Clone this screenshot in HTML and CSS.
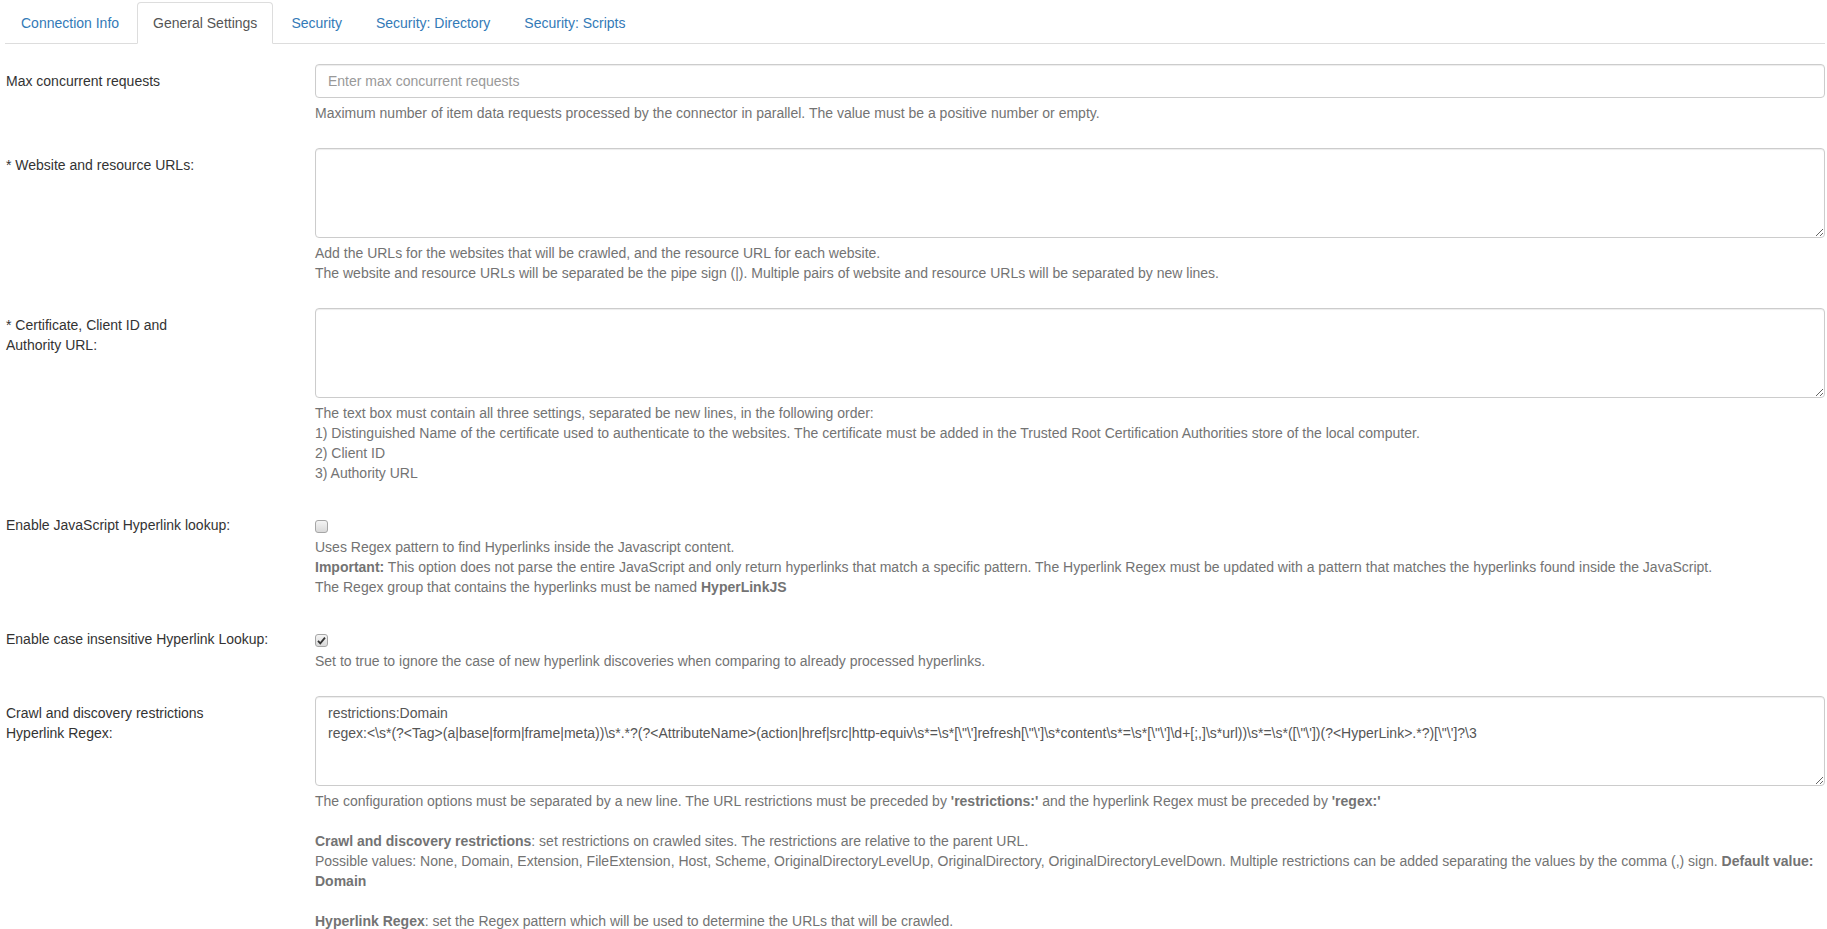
FILE: index.html
```html
<!DOCTYPE html>
<html lang="en">
<head>
    <meta charset="UTF-8">
    <title>Connector Settings</title>
    <link rel="stylesheet" href="styles.css">
</head>
<body>
    <ul class="nav-tabs">
        <li><a href="#">Connection Info</a></li>
        <li class="active"><a href="#">General Settings</a></li>
        <li><a href="#">Security</a></li>
        <li><a href="#">Security: Directory</a></li>
        <li><a href="#">Security: Scripts</a></li>
    </ul>

    <form class="tab-content">
        <div class="form-group">
            <label class="control-label" for="maxRequests">Max concurrent requests</label>
            <div class="control">
                <input type="text" class="form-control" id="maxRequests" placeholder="Enter max concurrent requests">
                <div class="help-block">Maximum number of item data requests processed by the connector in parallel. The value must be a positive number or empty.</div>
            </div>
        </div>

        <div class="form-group">
            <label class="control-label" for="websiteUrls">* Website and resource URLs:</label>
            <div class="control">
                <textarea class="form-control" id="websiteUrls"></textarea>
                <div class="help-block">
                    Add the URLs for the websites that will be crawled, and the resource URL for each website.<br>
                    The website and resource URLs will be separated be the pipe sign (|). Multiple pairs of website and resource URLs will be separated by new lines.
                </div>
            </div>
        </div>

        <div class="form-group">
            <label class="control-label" for="certificate">* Certificate, Client ID and<br>Authority URL:</label>
            <div class="control">
                <textarea class="form-control" id="certificate"></textarea>
                <div class="help-block">
                    The text box must contain all three settings, separated be new lines, in the following order:<br>
                    1) Distinguished Name of the certificate used to authenticate to the websites. The certificate must be added in the Trusted Root Certification Authorities store of the local computer.<br>
                    2) Client ID<br>
                    3) Authority URL
                </div>
            </div>
        </div>

        <div class="form-group">
            <label class="control-label" for="jsLookup">Enable JavaScript Hyperlink lookup:</label>
            <div class="control">
                <div class="checkbox">
                    <span class="check-box"><input type="checkbox" id="jsLookup"></span>
                </div>
                <div class="help-block check-help">
                    Uses Regex pattern to find Hyperlinks inside the Javascript content.<br>
                    <strong>Important:</strong> This option does not parse the entire JavaScript and only return hyperlinks that match a specific pattern. The Hyperlink Regex must be updated with a pattern that matches the hyperlinks found inside the JavaScript.<br>
                    The Regex group that contains the hyperlinks must be named <strong>HyperLinkJS</strong>
                </div>
            </div>
        </div>

        <div class="form-group">
            <label class="control-label" for="caseLookup">Enable case insensitive Hyperlink Lookup:</label>
            <div class="control">
                <div class="checkbox">
                    <span class="check-box">
                        <input type="checkbox" id="caseLookup" checked>
                        <svg class="tick" width="13" height="13" viewBox="0 0 13 13"><path d="M3 6.8 L5.3 9.3 L10 3.6" fill="none" stroke="#333" stroke-width="1.8"/></svg>
                    </span>
                </div>
                <div class="help-block check-help">Set to true to ignore the case of new hyperlink discoveries when comparing to already processed hyperlinks.</div>
            </div>
        </div>

        <div class="form-group">
            <label class="control-label" for="restrictions">Crawl and discovery restrictions<br>Hyperlink Regex:</label>
            <div class="control">
                <textarea class="form-control" id="restrictions">restrictions:Domain
regex:&lt;\s*(?&lt;Tag&gt;(a|base|form|frame|meta))\s*.*?(?&lt;AttributeName&gt;(action|href|src|http-equiv\s*=\s*[\"\']refresh[\"\']\s*content\s*=\s*[\"\']\d+[;,]\s*url))\s*=\s*([\"\'])(?&lt;HyperLink&gt;.*?)[\"\']?\3</textarea>
                <div class="help-block">
                    The configuration options must be separated by a new line. The URL restrictions must be preceded by <strong>'restrictions:'</strong> and the hyperlink Regex must be preceded by <strong>'regex:'</strong><br>
                    <br>
                    <strong>Crawl and discovery restrictions</strong>: set restrictions on crawled sites. The restrictions are relative to the parent URL.<br>
                    Possible values: None, Domain, Extension, FileExtension, Host, Scheme, OriginalDirectoryLevelUp, OriginalDirectory, OriginalDirectoryLevelDown. Multiple restrictions can be added separating the values by the comma (,) sign. <strong>Default value: Domain</strong><br>
                    <br>
                    <strong>Hyperlink Regex</strong>: set the Regex pattern which will be used to determine the URLs that will be crawled.
                </div>
            </div>
        </div>
    </form>
</body>
</html>
```

FILE: styles.css
```css
body {
    font-family: 'Liberation Sans', Arial, sans-serif;
    font-size: 14px;
    line-height: 20px;
    color: #333;
    background-color: #fff;
    margin: 0;
}
.nav-tabs {
    list-style: none;
    display: flex;
    margin: 2px 2px 0 5px;
    padding: 0;
    border-bottom: 1px solid #ddd;
}
.nav-tabs li {
    margin-bottom: -1px;
    margin-right: 2px;
}
.nav-tabs a {
    display: block;
    padding: 10px 15px;
    line-height: 20px;
    color: #337ab7;
    text-decoration: none;
    border: 1px solid transparent;
    border-radius: 4px 4px 0 0;
}
.nav-tabs .active a {
    color: #555;
    background-color: #fff;
    border-color: #ddd #ddd transparent;
}
.tab-content {
    padding: 20px 2px 0 6px;
}
.form-group {
    display: flex;
    margin-bottom: 15px;
}
.control-label {
    width: 309px;
    flex-shrink: 0;
    padding-top: 7px;
}
.control {
    flex: 1;
    min-width: 0;
}
.form-control {
    display: block;
    width: 100%;
    box-sizing: border-box;
    height: 34px;
    padding: 6px 12px;
    font-family: 'Liberation Sans', Arial, sans-serif;
    font-size: 14px;
    line-height: 20px;
    color: #555;
    background-color: #fff;
    border: 1px solid #ccc;
    border-radius: 4px;
    box-shadow: inset 0 1px 1px rgba(0, 0, 0, .075);
    margin: 0;
}
.form-control::placeholder {
    color: #999;
}
textarea.form-control {
    height: 90px;
    resize: vertical;
}
.help-block {
    color: #737373;
    margin: 5px 0 10px;
}
.help-block strong {
    font-weight: bold;
}
.checkbox {
    padding-top: 7px;
    height: 20px;
}
.check-box {
    position: relative;
    display: inline-block;
    width: 13px;
    height: 13px;
    margin-top: 5px;
    vertical-align: top;
}
.check-box input {
    appearance: none;
    -webkit-appearance: none;
    display: block;
    width: 13px;
    height: 13px;
    margin: 0;
    box-sizing: border-box;
    border: 1px solid #a6a6a6;
    border-radius: 3px;
    background: linear-gradient(#f4f4f4, #d9d9d9);
}
.check-box .tick {
    position: absolute;
    left: 0;
    top: 0;
}
.check-help {
    margin-top: 2px;
}
```
